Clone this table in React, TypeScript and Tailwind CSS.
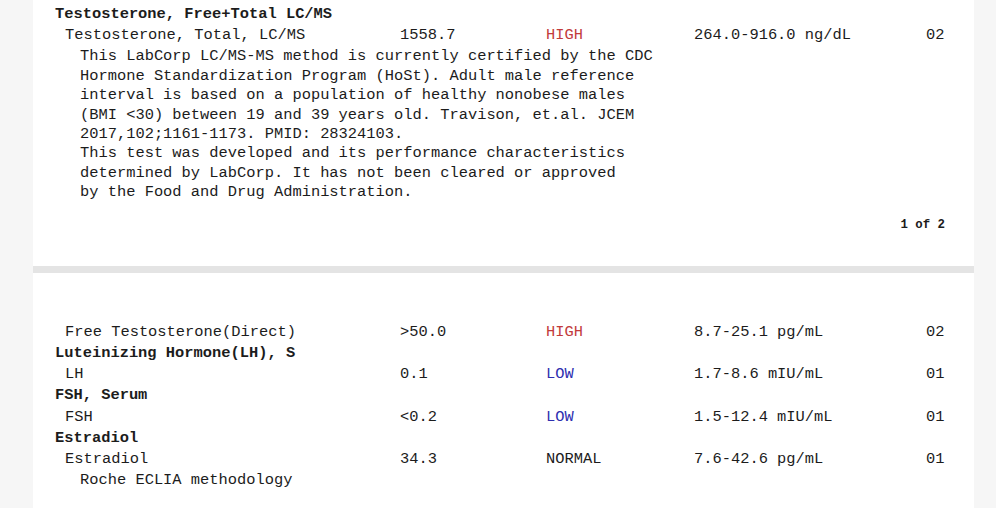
import React from "react";

type Row =
  | { kind: "title"; text: string }
  | { kind: "result"; name: string; value: string; flag: string; range: string; lab: string }
  | { kind: "note"; text: string };

const page2: Row[] = [
  { kind: "result", name: "Free Testosterone(Direct)", value: ">50.0", flag: "HIGH", range: "8.7-25.1 pg/mL", lab: "02" },
  { kind: "title", text: "Luteinizing Hormone(LH), S" },
  { kind: "result", name: "LH", value: "0.1", flag: "LOW", range: "1.7-8.6 mIU/mL", lab: "01" },
  { kind: "title", text: "FSH, Serum" },
  { kind: "result", name: "FSH", value: "<0.2", flag: "LOW", range: "1.5-12.4 mIU/mL", lab: "01" },
  { kind: "title", text: "Estradiol" },
  { kind: "result", name: "Estradiol", value: "34.3", flag: "NORMAL", range: "7.6-42.6 pg/mL", lab: "01" },
  { kind: "note", text: "Roche ECLIA methodology" },
];

const comment = [
  "This LabCorp LC/MS-MS method is currently certified by the CDC",
  "Hormone Standardization Program (HoSt). Adult male reference",
  "interval is based on a population of healthy nonobese males",
  "(BMI <30) between 19 and 39 years old. Travison, et.al. JCEM",
  "2017,102;1161-1173. PMID: 28324103.",
  "This test was developed and its performance characteristics",
  "determined by LabCorp. It has not been cleared or approved",
  "by the Food and Drug Administration.",
];

function flagColor(flag: string) {
  if (flag === "HIGH") return "text-[#c23b3b]";
  if (flag === "LOW") return "text-[#2f2fb0]";
  return "text-[#1c1c1c]";
}

function ResultRow({ name, value, flag, range, lab }: { name: string; value: string; flag: string; range: string; lab: string }) {
  return (
    <div className="flex h-[21.15px] items-center whitespace-pre">
      <div className="w-[345px] pl-[10px]">{name}</div>
      <div className="w-[146px]">{value}</div>
      <div className={`w-[148px] ${flagColor(flag)}`}>{flag}</div>
      <div className="w-[232px]">{range}</div>
      <div>{lab}</div>
    </div>
  );
}

export default function App() {
  return (
    <div
      className="flex h-[508px] w-[996px] overflow-hidden bg-[#f6f6f6] text-[15.4px] text-[#1c1c1c]"
      style={{ fontFamily: '"Liberation Mono", "Courier New", monospace' }}
    >
      <div className="w-[33px] shrink-0" />
      <div className="flex w-[941px] shrink-0 flex-col">
        <div className="h-[266px] bg-white pl-[22px] pt-[4px]">
          <div className="flex h-[21px] items-center font-bold">Testosterone, Free+Total LC/MS</div>
          <ResultRow name="Testosterone, Total, LC/MS" value="1558.7" flag="HIGH" range="264.0-916.0 ng/dL" lab="02" />
          <div className="mt-[1px] pl-[25px] leading-[19.45px] whitespace-pre">
            {comment.map((line) => (
              <div key={line}>{line}</div>
            ))}
          </div>
          <div className="mt-[13px] flex justify-end pr-[29px] text-[12.4px] font-bold">1 of 2</div>
        </div>
        <div className="h-[7px] bg-[#e4e4e4]" />
        <div className="flex-1 bg-white pl-[22px] pt-[49px]">
          {page2.map((row, i) => {
            if (row.kind === "title")
              return (
                <div key={i} className="flex h-[21.15px] items-center font-bold">
                  {row.text}
                </div>
              );
            if (row.kind === "note")
              return (
                <div key={i} className="flex h-[21.15px] items-center pl-[25px]">
                  {row.text}
                </div>
              );
            return <ResultRow key={i} {...row} />;
          })}
        </div>
      </div>
      <div className="flex-1" />
    </div>
  );
}
